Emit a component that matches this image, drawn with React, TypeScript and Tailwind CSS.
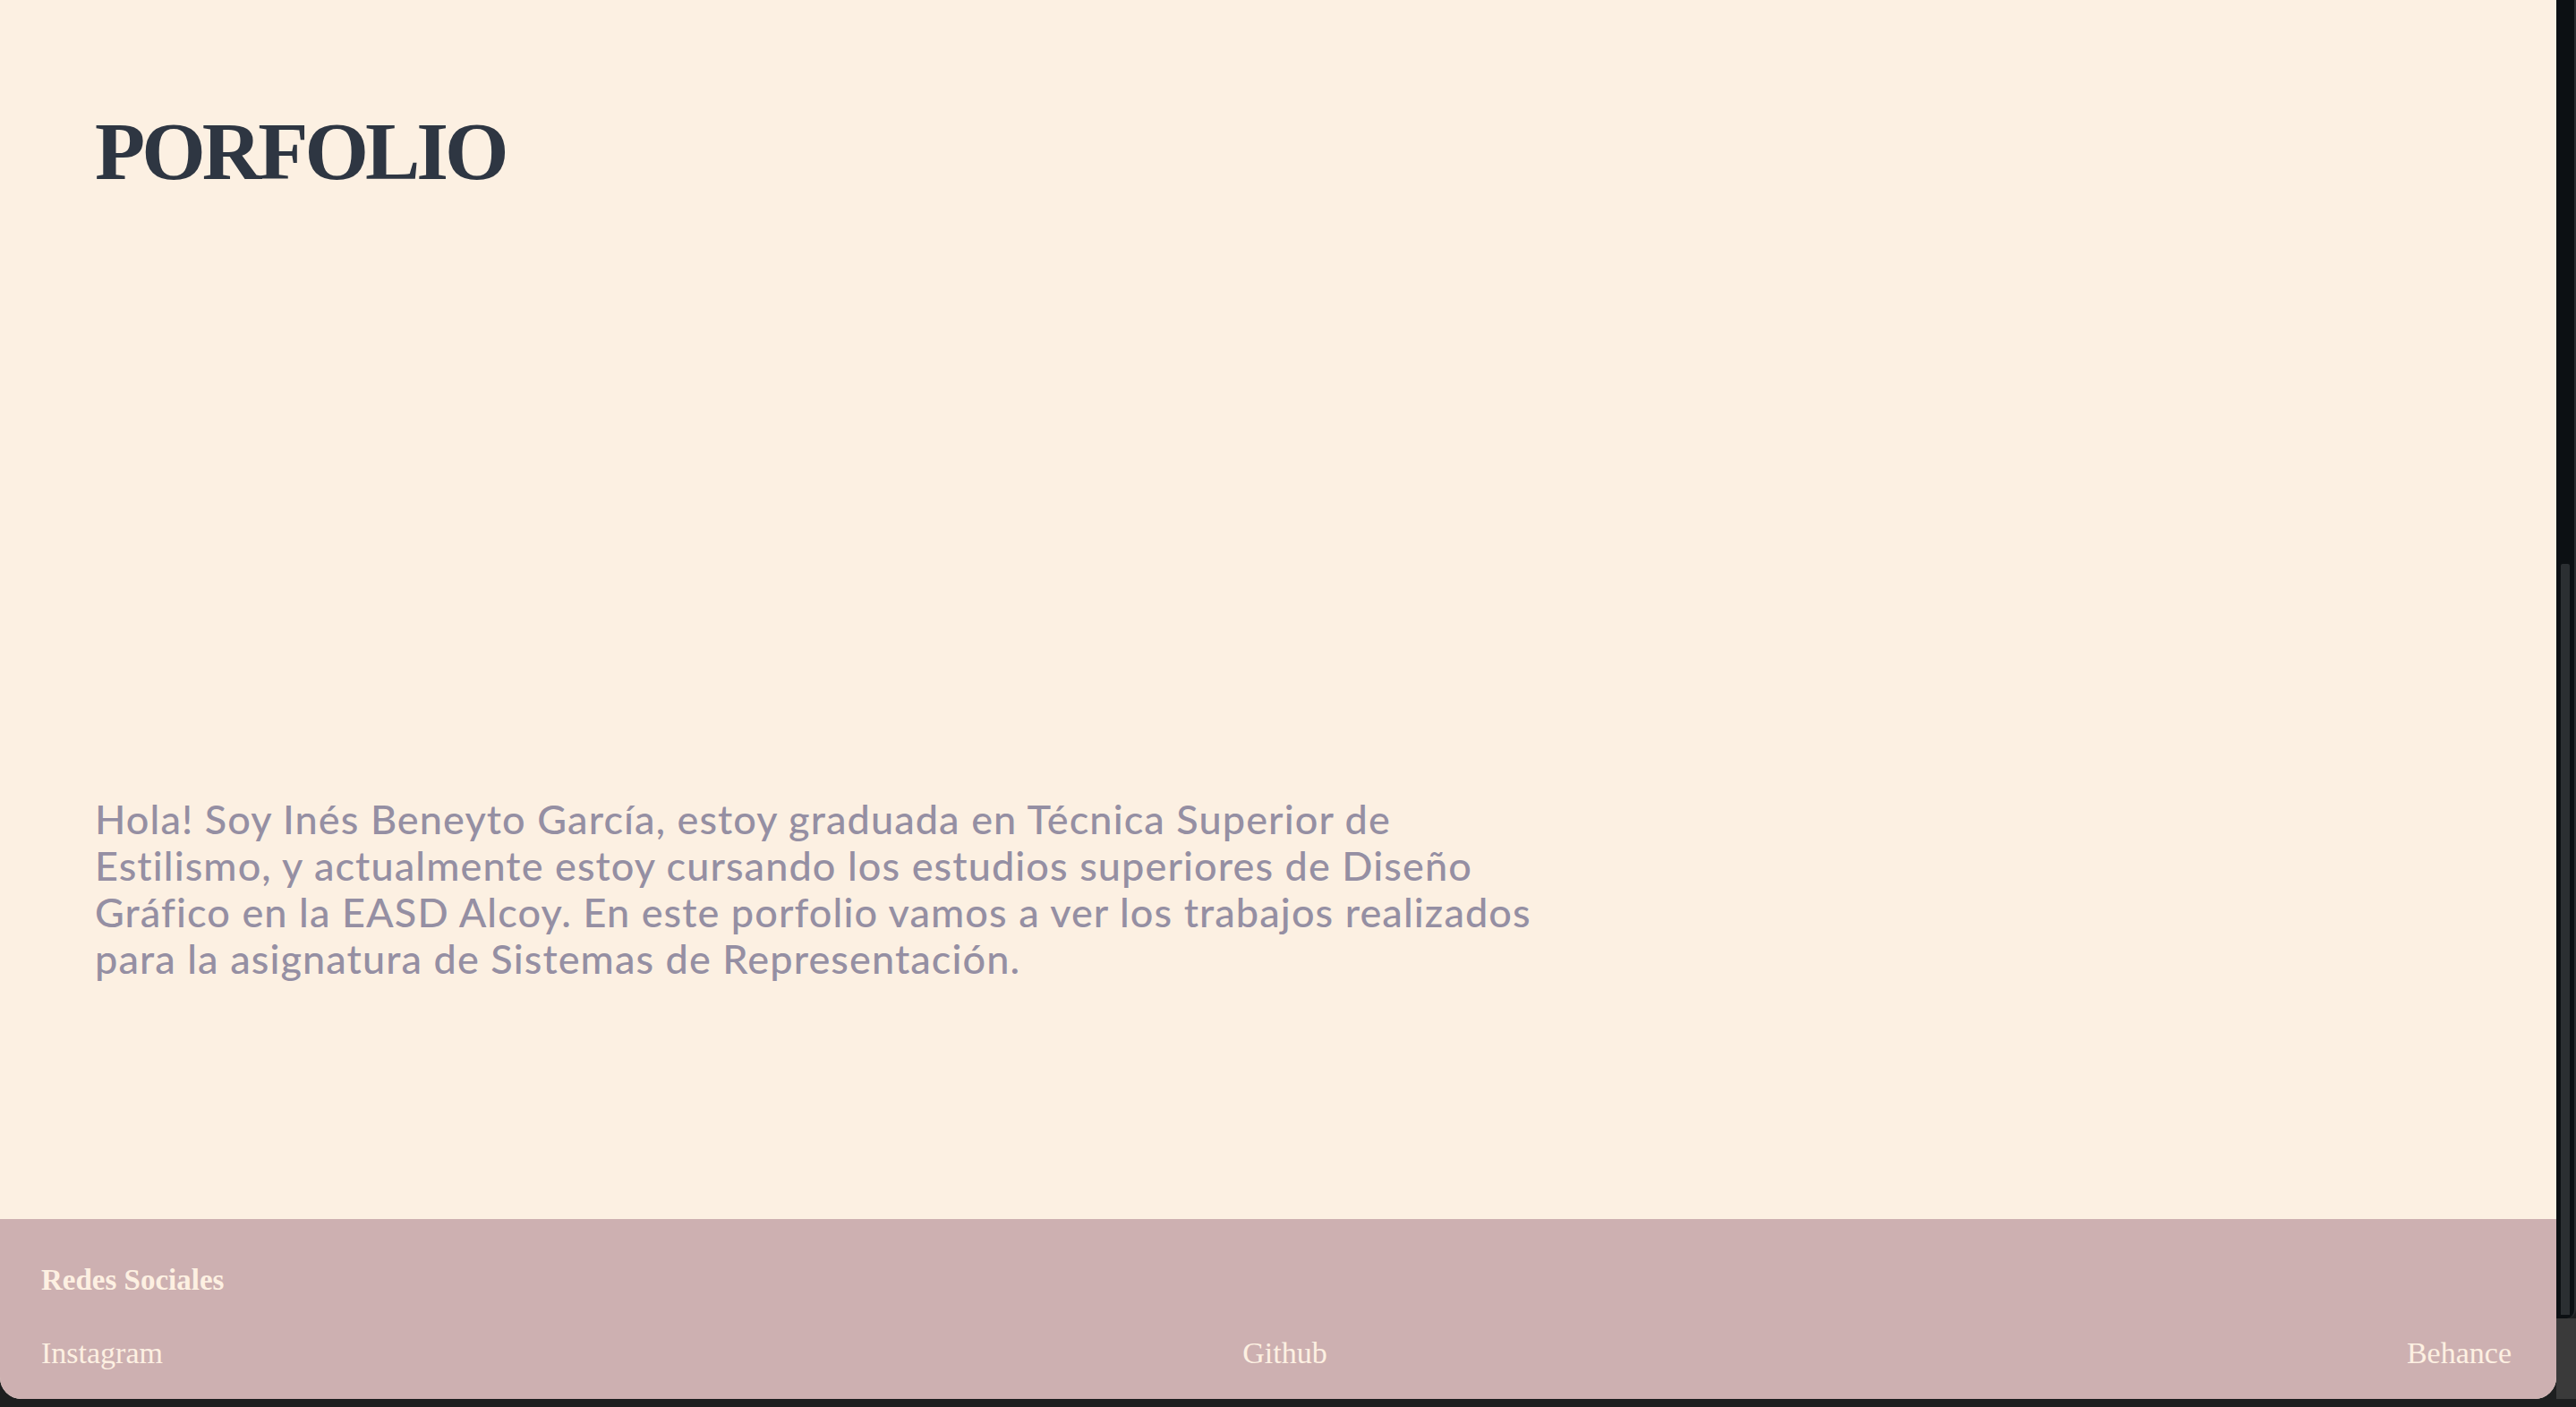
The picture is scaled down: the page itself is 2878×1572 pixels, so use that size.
import React from 'react';

const socials = ['Instagram', 'Github', 'Behance'];

export default function App() {
  return (
    <div className="w-[2878px] h-[1572px] overflow-hidden bg-[#1e1f20] flex flex-col">
      <div className="flex flex-1">
        {/* Page */}
        <div className="w-[2856px] h-[1563px] bg-[#fcf0e2] rounded-b-[24px] overflow-hidden flex flex-col">
          <header className="pt-[123px] pl-[106px]">
            <h1 className="font-['Liberation_Serif',serif] font-bold text-[92px] leading-none tracking-[-4px] text-[#2e3642]">
              PORFOLIO
            </h1>
          </header>

          <section className="pl-[106px] pt-[674px] flex-1">
            <p className="whitespace-nowrap font-['Lato',sans-serif] font-medium text-[45px] leading-[52px] tracking-[1.1px] text-[#958fa3]">
              Hola! Soy Inés Beneyto García, estoy graduada en Técnica Superior de
              <br />
              Estilismo, y actualmente estoy cursando los estudios superiores de Diseño
              <br />
              Gráfico en la EASD Alcoy. En este porfolio vamos a ver los trabajos realizados
              <br />
              para la asignatura de Sistemas de Representación.
            </p>
          </section>

          <footer className="h-[201px] bg-[#cdb0b1] pl-[46px] pr-[50px] pt-[52px] font-['Liberation_Serif',serif] text-[#fdf0e2]">
            <h2 className="font-bold text-[33px] leading-none">Redes Sociales</h2>
            <div className="mt-[48px] flex justify-between text-[34px] leading-none">
              {socials.map((s) => (
                <a key={s} href="#">{s}</a>
              ))}
            </div>
          </footer>
        </div>

        {/* Scrollbar strip */}
        <div className="w-[22px] h-[1563px] flex flex-col">
          <div className="flex-1 bg-[#0c1013] border-r-2 border-[#2a2d30] rounded-br-[10px] flex justify-center pt-[630px] pb-[4px]">
            <div className="w-[10px] bg-[#2b2f32] rounded-t-[2px]" />
          </div>
          <div className="h-[90px] bg-[#3a3a3a]" />
        </div>
      </div>
    </div>
  );
}
